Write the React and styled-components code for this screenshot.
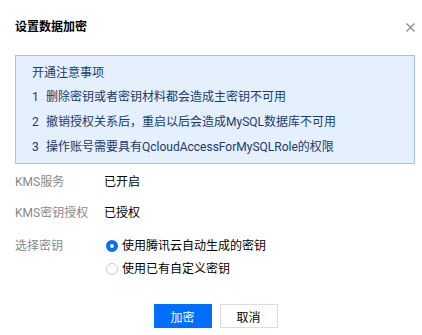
import React, { useState } from 'react';
import styled, { createGlobalStyle } from 'styled-components';

const Global = createGlobalStyle`
  html, body {
    margin: 0;
    padding: 0;
    background: #fff;
  }
  * {
    box-sizing: border-box;
  }
`;

const font = `Roboto, "Noto Sans CJK SC", sans-serif`;

const Dialog = styled.div`
  width: 422px;
  height: 335px;
  padding: 18px 7px 0 15px;
  font-family: ${font};
  font-size: 12px;
  color: #000;
  background: #fff;
`;

const Header = styled.div`
  display: flex;
  align-items: center;
  justify-content: space-between;
  height: 18px;
`;

const Title = styled.h3`
  margin: 0;
  font-size: 12px;
  font-weight: 700;
  line-height: 18px;
  color: #000;
`;

const Close = styled.button`
  width: 9px;
  height: 9px;
  margin-right: 0;
  padding: 0;
  border: 0;
  background: none;
  display: flex;
  cursor: pointer;
`;

const Notice = styled.div`
  margin-top: 19px;
  width: 400px;
  padding: 5px 16px 3px;
  border: 1px solid #9dc6f7;
  background: #e5f0fd;
  color: #1c3a6a;
`;

const NoticeTitle = styled.div`
  line-height: 24px;
`;

const NoticeItem = styled.div`
  display: flex;
  line-height: 25px;
`;

const Num = styled.span`
  width: 14px;
  flex: none;
`;

const Row = styled.div`
  display: flex;
  margin-top: ${(p) => p.$gap}px;
  line-height: 20px;
`;

const Label = styled.div`
  width: 89px;
  flex: none;
  color: #888;
`;

const Value = styled.div`
  color: #000;
`;

const Options = styled.div`
  display: flex;
  flex-direction: column;
  gap: 3px;
`;

const Option = styled.label`
  display: flex;
  align-items: center;
  gap: 4px;
  padding-left: 2px;
  cursor: pointer;
  color: #000;
`;

const Dot = styled.span`
  width: 12px;
  height: 12px;
  border-radius: 50%;
  flex: none;
  background: #fff;
  border: ${(p) => (p.$on ? '4px solid #006eff' : '1px solid #c8c8c8')};
`;

const Footer = styled.div`
  display: flex;
  justify-content: center;
  gap: 8px;
  margin-top: 25px;
  padding-left: 1px;
`;

const Button = styled.button`
  width: 58px;
  height: 24px;
  padding: 0;
  font-family: ${font};
  font-size: 12px;
  cursor: pointer;
  border: 1px solid ${(p) => (p.$primary ? '#006eff' : '#dddddd')};
  background: ${(p) => (p.$primary ? '#006eff' : '#fff')};
  color: ${(p) => (p.$primary ? '#fff' : '#000')};
`;

const notes = [
  '删除密钥或者密钥材料都会造成主密钥不可用',
  '撤销授权关系后，重启以后会造成MySQL数据库不可用',
  '操作账号需要具有QcloudAccessForMySQLRole的权限',
];

export default function App() {
  const [mode, setMode] = useState('auto');

  return (
    <>
      <Global />
      <Dialog>
        <Header>
          <Title>设置数据加密</Title>
          <Close aria-label="关闭">
            <svg width="9" height="9" viewBox="0 0 9 9">
              <path d="M0.5 0.5L8.5 8.5M8.5 0.5L0.5 8.5" stroke="#888" strokeWidth="1.2" />
            </svg>
          </Close>
        </Header>

        <Notice>
          <NoticeTitle>开通注意事项</NoticeTitle>
          {notes.map((n, i) => (
            <NoticeItem key={i}>
              <Num>{i + 1}</Num>
              <span>{n}</span>
            </NoticeItem>
          ))}
        </Notice>

        <Row $gap={8}>
          <Label>KMS服务</Label>
          <Value>已开启</Value>
        </Row>
        <Row $gap={11}>
          <Label>KMS密钥授权</Label>
          <Value>已授权</Value>
        </Row>
        <Row $gap={13}>
          <Label>选择密钥</Label>
          <Options>
            <Option onClick={() => setMode('auto')}>
              <Dot $on={mode === 'auto'} />
              使用腾讯云自动生成的密钥
            </Option>
            <Option onClick={() => setMode('custom')}>
              <Dot $on={mode === 'custom'} />
              使用已有自定义密钥
            </Option>
          </Options>
        </Row>

        <Footer>
          <Button $primary>加密</Button>
          <Button>取消</Button>
        </Footer>
      </Dialog>
    </>
  );
}
